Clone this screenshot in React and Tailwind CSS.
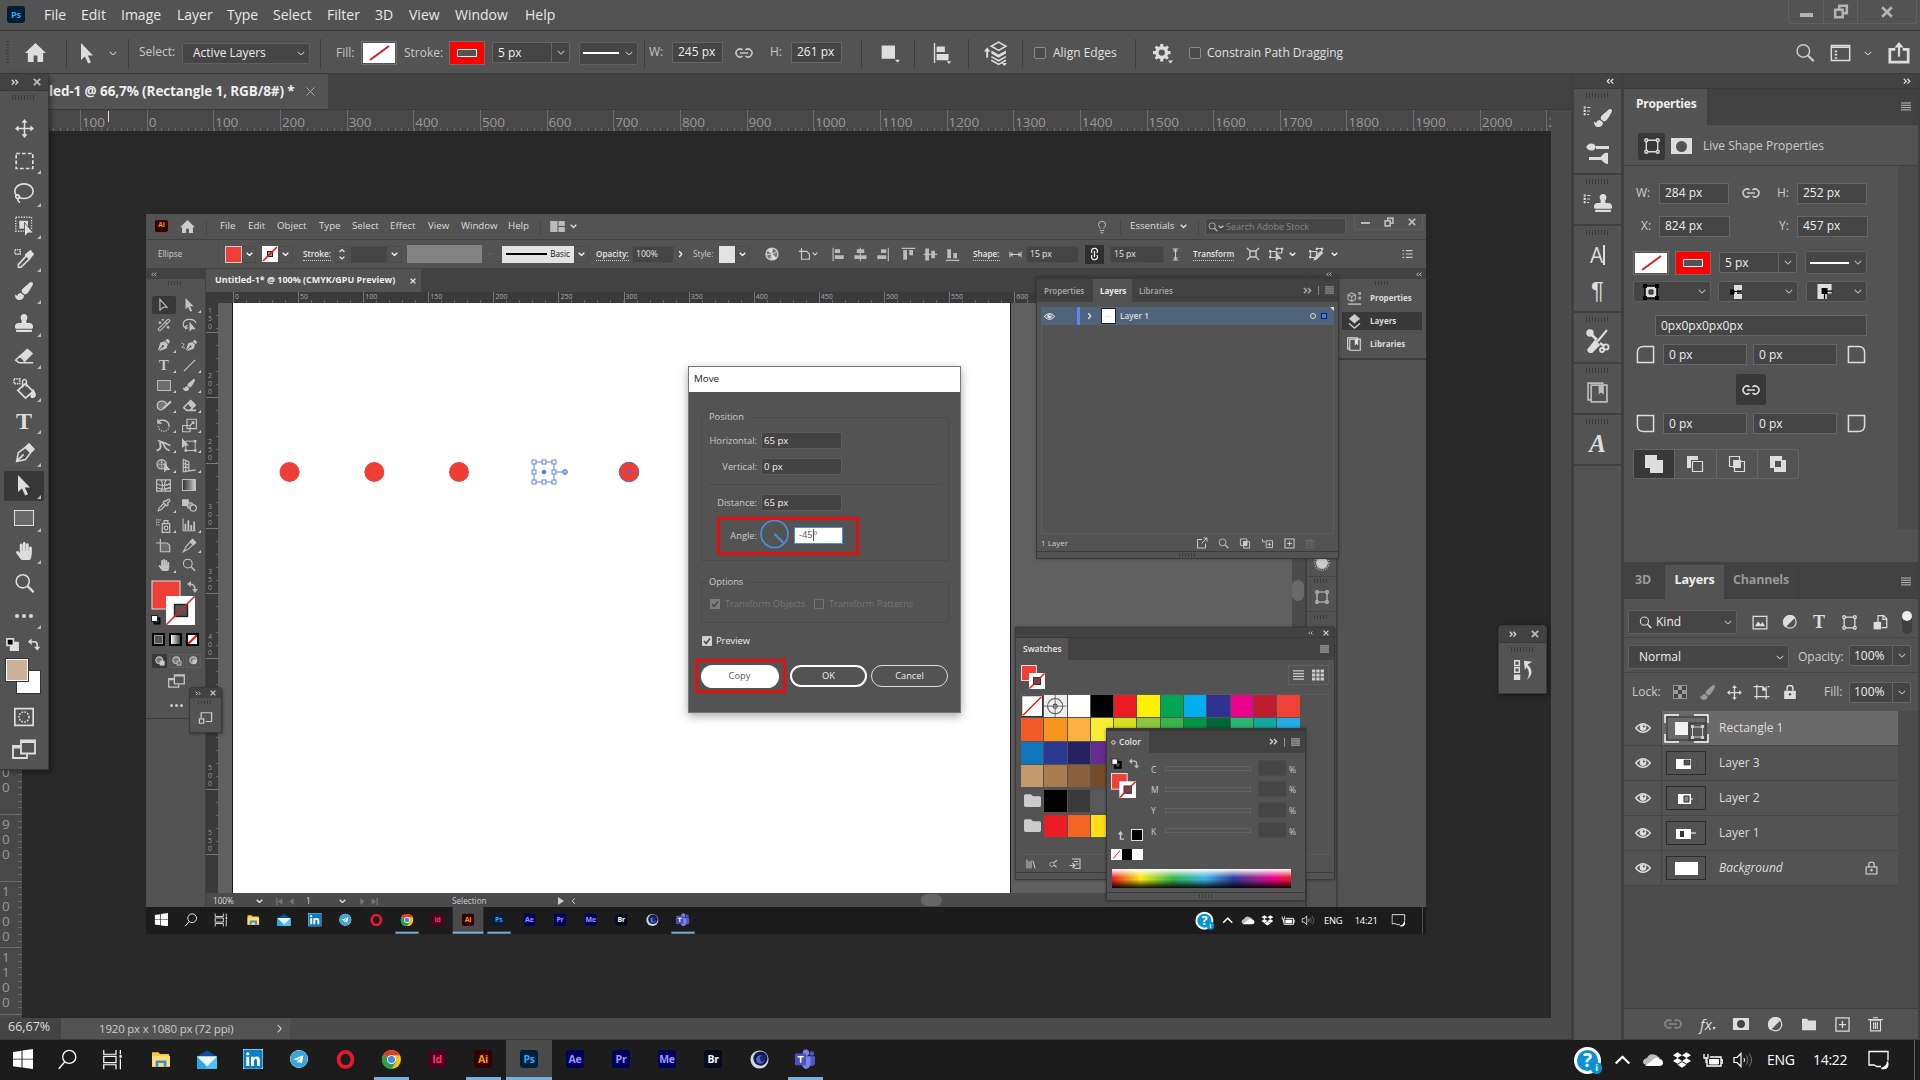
import { FaDropbox, FaEraser, FaFolder, FaHandPaper, FaPaintBrush, FaPenNib, FaStamp, FaTelegram, FaLinkedin } from 'react-icons/fa'
import { Lasso, Pipette, Wand2, Lightbulb, Library } from 'lucide-react'

/* ---------- small shared pieces ---------- */

function Ico({ vb = 24, className = 'w-5 h-5', children }) {
  return (
    <svg viewBox={`0 0 ${vb} ${vb}`} className={`shrink-0 ${className}`} fill="none" stroke="currentColor" strokeWidth="1.8">
      {children}
    </svg>
  )
}

function Chev({ className = 'w-[8px]' }) {
  return (
    <svg viewBox="0 0 10 6" className={`shrink-0 ${className}`} fill="none" stroke="currentColor" strokeWidth="1.3"><path d="M1 1l4 4 4-4" /></svg>
  )
}

function Dbl({ left, className = 'w-[8px]' }) {
  return (
    <svg viewBox="0 0 10 8" className={`shrink-0 ${className} ${left ? 'rotate-180' : ''}`} fill="none" stroke="currentColor" strokeWidth="1.6"><path d="M1 1l3 3-3 3M5.500 1l3 3-3 3" /></svg>
  )
}

function Cross({ className = 'w-[8px]' }) {
  return (
    <svg viewBox="0 0 10 10" className={`shrink-0 ${className}`} fill="none" stroke="currentColor" strokeWidth="2.2"><path d="M1 1l8 8M9 1l-8 8" /></svg>
  )
}

function Burger({ className = 'w-[10px]' }) {
  return (
    <svg viewBox="0 0 10 9" className={`shrink-0 ${className}`} stroke="currentColor" strokeWidth="1"><path d="M0 1h10M0 3.300h10M0 5.600h10M0 7.900h10" /></svg>
  )
}

const Grip = ({ className = 'w-[24px] h-[5px]' }) => (
  <div className={`shrink-0 bg-[repeating-linear-gradient(90deg,#3a3a3a_0_1px,transparent_1px_3px)] ${className}`} />
)

const Div = ({ className = '' }) => <div className={`w-px h-[29px] bg-[#3e3e3e] shrink-0 ${className}`} />

function NoneBox({ className }) {
  return (
    <svg viewBox="0 0 32 20" preserveAspectRatio="none" className={`shrink-0 ${className}`}><rect width="32" height="20" fill="#fff" /><path d="M7 17L26 3" stroke="#d0202a" strokeWidth="2" /></svg>
  )
}

function StrokeRed({ className }) {
  return (
    <svg viewBox="0 0 32 20" className={className}><rect width="32" height="20" fill="#f00" /><rect x="6.500" y="6.500" width="19" height="7" fill="#535353" stroke="#fff" /></svg>
  )
}

const Home = ({ className }) => (
  <svg viewBox="0 0 22 20" className={`shrink-0 ${className}`} fill="currentColor"><path d="M11 0L0 10.500h3V20h6v-7h4v7h6v-9.500h3z" /></svg>
)

const ArrowIcon = ({ className, hollow }) => (
  <svg viewBox="0 0 14 21" className={`shrink-0 ${className}`} fill={hollow ? 'none' : 'currentColor'} stroke={hollow ? 'currentColor' : 'none'} strokeWidth="1.500"><path d={hollow ? 'M2 2v15l4.500-4H12z' : 'M1 0v17l4-3.500 3.200 7 2.800-1.300-3.200-6.700H13z'} /></svg>
)

const LinkIcon = ({ className = '', size = 'w-[18px] h-[10px]' }) => (
  <svg viewBox="0 0 18 10" className={`shrink-0 ${size} ${className}`} fill="none" stroke="currentColor" strokeWidth="1.600"><path d="M7.500 1.800A4 4 0 1 0 7.500 8.200M10.500 1.800A4 4 0 1 1 10.500 8.200M5 5h8" /></svg>
)

const Nodes = ({ className }) => (
  <Ico vb={14} className={className}><g strokeWidth="1.200"><path d="M2 2h10v10H2z" /><g fill="#535353"><circle cx="2" cy="2" r="1.300" /><circle cx="12" cy="2" r="1.300" /><circle cx="2" cy="12" r="1.300" /><circle cx="12" cy="12" r="1.300" /></g></g></Ico>
)

const Magnifier = ({ className = 'w-5 h-5' }) => (
  <Ico className={className}><circle cx="10" cy="9.500" r="7.500" /><path d="M15.500 15l7 7" strokeWidth="2.600" /></Ico>
)

const MoveIcon = ({ className = 'w-[19px] h-[19px]' }) => (
  <Ico className={className}><path d="M12 3v18M3 12h18" strokeWidth="2" /><path d="M12 0l3.800 4.600H8.200zM12 24l3.800-4.600H8.200zM0 12l4.600-3.800v7.600zM24 12l-4.600-3.800v7.600z" fill="currentColor" stroke="none" /></Ico>
)

const TypeT = ({ className }) => <span className={`font-['Liberation_Serif'] font-bold leading-none ${className}`}>T</span>

const ScreenMode = ({ className }) => (
  <Ico className={className}><path d="M9 8H1v12h14v-4M1 9.500h8" /><path d="M9 2.500h14v13H9zM9 4h14" /></Ico>
)

const SwapArrow = ({ className }) => (
  <Ico vb={14} className={className}><path d="M3 4h5q3 0 3 3v3" strokeWidth="1.700" /><path d="M5 .5L1 4l4 3.500zM7.500 9.500h7L11 13.500z" fill="currentColor" stroke="none" /></Ico>
)

const Eye = ({ className = 'w-[16px] h-[12px]' }) => (
  <svg viewBox="0 0 16 12" className={`shrink-0 ${className}`} fill="none"><path d="M.7 6Q8-2.500 15.300 6 8 14.500.7 6z" stroke="#ddd" strokeWidth="1.500" fill="none" /><circle cx="8" cy="5.600" r="3.300" fill="#ddd" /><circle cx="8.800" cy="4.600" r="1" fill="#444" /></svg>
)

function Field({ className, children }) {
  return <div className={`bg-[#454545] border border-[#666] flex items-center pl-[5px] text-[12px] text-[#eee] leading-none shrink-0 ${className}`}>{children}</div>
}

function Drop({ className, children }) {
  return (
    <div className={`bg-[#454545] border border-[#606060] rounded-[2px] flex items-center justify-between text-[12px] text-[#eee] leading-none shrink-0 pr-[4px] ${className}`}>
      {children}
      <Chev className="w-[8px] text-[#bbb]" />
    </div>
  )
}

function Split({ className, children, pl = 'pl-[5px]' }) {
  return (
    <div className={`bg-[#454545] border border-[#666] rounded-[2px] flex text-[12px] text-[#eee] leading-none shrink-0 ${className}`}>
      <div className={`flex-1 flex items-center ${pl}`}>{children}</div>
      <div className="w-[18px] border-l border-[#666] flex items-center justify-center"><Chev className="w-[8px] text-[#bbb]" /></div>
    </div>
  )
}

/* ---------- menu + options bar ---------- */

const MENU = [
  ['File', 'w-[37px]'], ['Edit', 'w-[40px]'], ['Image', 'w-[56px]'], ['Layer', 'w-[50px]'], ['Type', 'w-[46px]'], ['Select', 'w-[54px]'],
  ['Filter', 'w-[48px]'], ['3D', 'w-[34px]'], ['View', 'w-[46px]'], ['Window', 'w-[70px]'], ['Help', 'w-[40px]'],
]

function MenuBar() {
  return (
    <div className="h-[31px] shrink-0 flex border-b border-[#3b3b3b] bg-[#535353]">
      <div className="ml-[7px] mt-[6px] w-[18px] h-[17px] rounded-[3px] bg-[#001d34] text-[#31a8ff] text-[9px] font-bold flex items-center justify-center">Ps</div>
      <div className="ml-[19px] flex h-[29px] items-center text-[14px] leading-none text-[#e8e8e8]">
        {MENU.map(([t, w]) => <span key={t} className={w}>{t}</span>)}
      </div>
      <div className="ml-auto mr-[3px] flex h-[24px] border border-t-0 border-[#606060] rounded-b-[3px] text-[#b4b4b4]">
        <div className="w-[35px] border-r border-[#606060] flex justify-center"><div className="mt-[13px] w-[13px] h-[4px] bg-[#b4b4b4]" /></div>
        <div className="w-[34px] border-r border-[#606060] flex items-center justify-center">
          <Ico vb={18} className="w-[18px] h-[15px]"><path d="M7 6V2h9v9h-4M2 7h9v9H2z" strokeWidth="3" /></Ico>
        </div>
        <div className="w-[58px] flex items-center justify-center"><Cross className="w-[12px]" /></div>
      </div>
    </div>
  )
}

const Lbl = ({ className, children }) => <span className={`shrink-0 whitespace-nowrap ${className}`}>{children}</span>

function OptionsBar() {
  return (
    <div className="h-[43px] pt-[2px] shrink-0 flex items-center bg-[#535353] border-b border-[#3b3b3b] text-[12px] leading-none text-[#c8c8c8]">
      <div className="ml-[6px] w-[3px] h-[24px] shrink-0 bg-[repeating-linear-gradient(#3c3c3c_0_1px,transparent_1px_3px)]" />
      <Home className="ml-[16px] w-[21px] text-[#ddd]" />
      <Div className="ml-[20px]" />
      <ArrowIcon className="ml-[13px] w-[14px] h-[21px] text-[#ddd]" />
      <Chev className="ml-[15px] w-[8px]" />
      <Div className="ml-[11px]" />
      <Lbl className="ml-[10px] w-[43px] mt-[-3px]">Select:</Lbl>
      <Drop className="w-[128px] h-[21px] pl-[10px]">Active Layers</Drop>
      <Div className="ml-[10px]" />
      <Lbl className="ml-[15px] w-[25px]">Fill:</Lbl>
      <div className="w-[36px] h-[24px] border border-[#707070] p-px shrink-0"><NoneBox className="w-full h-full" /></div>
      <Lbl className="ml-[7px] w-[45px]">Stroke:</Lbl>
      <div className="w-[36px] h-[24px] border border-[#707070] p-px shrink-0 bg-[#f00]"><StrokeRed className="w-full h-full" /></div>
      <Split className="ml-[7px] w-[78px] h-[21px] mt-[-1px]">5 px</Split>
      <Drop className="ml-[9px] w-[59px] h-[23px] pl-[3px]"><div className="w-[36px] h-[2px] bg-white" /></Drop>
      <Div className="ml-[6px]" />
      <Lbl className="ml-[4px] w-[23px] mt-[-2px]">W:</Lbl>
      <Field className="w-[51px] h-[21px] mt-[-2px]">245 px</Field>
      <LinkIcon className="ml-[12px] mt-[-1px]" />
      <Lbl className="ml-[17px] w-[21px] mt-[-2px]">H:</Lbl>
      <Field className="w-[51px] h-[21px] mt-[-2px]">261 px</Field>
      <Div className="ml-[19px]" />
      <Ico className="ml-[18px] w-[20px] h-[20px] text-[#ddd]"><path d="M2 3h16v16H2zM18 20h6l-3 3.500z" fill="currentColor" stroke="none" /></Ico>
      <Div className="ml-[14px]" />
      <Ico className="ml-[17px] w-[22px] h-[22px] text-[#ddd]"><path d="M2 1h1.500v22H2zM5 5h9v6H5zM5 13h13v7H5zM16 21h5l-2.500 3z" fill="currentColor" stroke="none" /></Ico>
      <Div className="ml-[14px]" />
      <Ico className="ml-[14px] w-[25px] h-[25px] text-[#ddd]"><path d="M4 16V8" /><path d="M1 10l3-4 3 4z" fill="currentColor" stroke="none" /><path d="M8 5l7-4 7 4-7 4z" strokeWidth="1.500" /><path d="M8 9l7 4 7-4v3l-7 4-7-4z" fill="currentColor" stroke="none" /><path d="M8 15l7 4 7-4M8 18.500l7 4 7-4" strokeWidth="1.500" /><path d="M18 21h5l-2.500 3z" fill="currentColor" stroke="none" /></Ico>
      <Div className="ml-[14px]" />
      <div className="ml-[11px] w-[12px] h-[12px] rounded-[2px] border border-[#8a8a8a] bg-[#4a4a4a] shrink-0" />
      <Lbl className="ml-[7px] w-[82px] text-[#e0e0e0]">Align Edges</Lbl>
      <Div />
      <Ico className="ml-[17px] w-[21px] h-[21px] text-[#ddd]"><circle cx="10" cy="11" r="5.500" strokeWidth="4" /><path d="M10 1v4M10 17v4M0 11h4M16 11h4M3 4l3 3M14 15l3 3M17 4l-3 3M6 15l-3 3" strokeWidth="3.500" /><path d="M17 20h6l-3 3.500z" fill="currentColor" stroke="none" /></Ico>
      <div className="ml-[15px] w-[12px] h-[12px] rounded-[2px] border border-[#8a8a8a] bg-[#4a4a4a] shrink-0" />
      <Lbl className="ml-[6px] text-[#e0e0e0]">Constrain Path Dragging</Lbl>
      <Magnifier className="ml-auto w-[20px] h-[20px] text-[#ccc]" />
      <Ico className="ml-[14px] w-[23px] h-[20px] text-[#ddd]"><path d="M1 3h22v18H1zM1 5h22" /><path d="M5 9h3v2H5zM5 13h3v2H5zM5 17h3v2H5z" fill="currentColor" stroke="none" /></Ico>
      <Chev className="ml-[12px] w-[8px]" />
      <Ico className="ml-[16px] mr-[10px] w-[22px] h-[22px] text-[#ddd]"><path d="M8 8H2v14h20V8h-6" strokeWidth="3" /><path d="M12 16V4" strokeWidth="2.400" /><path d="M12 0l5 6H7z" fill="currentColor" stroke="none" /></Ico>
    </div>
  )
}

/* ---------- left tool palette ---------- */

const PS_TOOLS = [
  <MoveIcon />,
  <Ico className="w-[21px] h-[20px]"><path d="M2 3h20v18H2z" strokeDasharray="4.500 2.500" strokeWidth="2" /></Ico>,
  <Lasso size={22} strokeWidth={1.8} />,
  <Ico className="w-[21px] h-[22px]"><path d="M2 2h18v16H2z" strokeDasharray="1.500 1.500" strokeWidth="1.500" /><path d="M6 6h10v9H6z" fill="currentColor" stroke="none" /><path d="M12 8v16l4-4h6z" fill="currentColor" stroke="#535353" strokeWidth="1" /></Ico>,
  <Ico className="w-[23px] h-[21px]"><path d="M1 2h6v5H1z" strokeDasharray="1.500 1" /><path d="M14 9L5 19v3h3l9-9" /><path d="M12 8l6 6 1-2 4-5-4-5-5 4z" fill="currentColor" stroke="none" /></Ico>,
  <FaPaintBrush size={18} />,
  <FaStamp size={18} />,
  <Ico className="w-[20px] h-[20px]"><path d="M2 17l5-5 6 6-2 2H6zM11 20h12" /><path d="M7 11l9-8 7 6-9 9z" fill="currentColor" stroke="none" /></Ico>,
  <Ico className="w-[23px] h-[23px]"><path d="M1 2h6v5H1z" strokeDasharray="1.500 1" /><path d="M5 14l8-7 8 8-8 7z" /><path d="M10 11V4q2-3 4 0v6" strokeWidth="1.500" /><path d="M21 14q4 6 0 7t0-7z" fill="currentColor" /></Ico>,
  <TypeT className="text-[24px]" />,
  <Ico className="w-[21px] h-[21px]"><path d="M3 21l2-10 8-6 6 6-6 8zM3 21l8-8" /><path d="M14 4l3-3 6 6-3 3z" fill="currentColor" /></Ico>,
  <ArrowIcon className="w-[14px] h-[21px]" />,
  <div className="w-[20px] h-[16px] border border-[#ddd] bg-[#6a6a6a]" />,
  <FaHandPaper size={18} />,
  <Magnifier className="w-[21px] h-[21px]" />,
  <div className="flex gap-[3px]"><i className="w-1 h-1 rounded-full bg-[#ddd]" /><i className="w-1 h-1 rounded-full bg-[#ddd]" /><i className="w-1 h-1 rounded-full bg-[#ddd]" /></div>,
]

function ToolPalette() {
  return (
    <div className="absolute left-0 top-[73px] w-[49px] h-[697px] bg-[#535353] border border-l-0 border-[#383838] rounded-t-[4px] shadow-[2px_2px_5px_rgba(0,0,0,0.4)] flex flex-col text-[#ddd]">
      <div className="h-[17px] bg-[#424242] border-b border-[#383838] flex items-center shrink-0 rounded-t-[4px]">
        <Dbl className="ml-[11px] w-[8px]" /><Cross className="ml-[14px] w-[8px] text-[#bbb]" />
      </div>
      <div className="h-[21px] flex justify-center pt-[4px] shrink-0"><Grip /></div>
      {PS_TOOLS.map((icon, i) => (
        <div key={i} className="h-[32.5px] shrink-0 px-[4px] py-[1px] flex">
          <div className={`relative flex-1 flex items-center justify-center ${i === 11 ? 'bg-[#383838] rounded-[2px]' : ''}`}>
            {icon}
            {i > 0 && i !== 14 && <div className="absolute right-[3px] bottom-[2px] border-l-[4px] border-b-[4px] border-l-transparent border-b-[#bbb]" />}
          </div>
        </div>
      ))}
      <div className="h-[25px] flex items-center justify-between pl-[6px] pr-[8px] shrink-0">
        <Ico vb={14} className="w-[13px] h-[13px]"><path d="M5 5h8v8H5z" fill="#ddd" /><path d="M1 1h7v7H1z" fill="#000" /></Ico>
        <SwapArrow className="w-[13px] h-[13px]" />
      </div>
      <svg viewBox="0 0 37 37" className="ml-[5px] mt-[1px] w-[37px] h-[37px] shrink-0">
        <rect x="11.500" y="12.500" width="24" height="23" fill="#fff" stroke="#333" />
        <rect x=".5" y=".5" width="23" height="23" fill="#fff" stroke="#333" /><rect x="2" y="2" width="20" height="20" fill="#cbb199" />
      </svg>
      <div className="h-[43px] flex items-center justify-center shrink-0">
        <Ico className="w-[24px] h-[20px]"><path d="M1 2h22v20H1z" strokeWidth="2" /><circle cx="12" cy="12" r="6" strokeDasharray="2 1.500" /></Ico>
      </div>
      <div className="flex justify-center"><ScreenMode className="w-[24px] h-[24px]" /></div>
    </div>
  )
}

/* ---------- Illustrator window placed on the canvas ---------- */

const AI_MENU = [
  ['File', 'w-[28px]'], ['Edit', 'w-[29px]'], ['Object', 'w-[42px]'], ['Type', 'w-[33px]'], ['Select', 'w-[38px]'], ['Effect', 'w-[38px]'],
  ['View', 'w-[33px]'], ['Window', 'w-[47px]'], ['Help', 'w-[32px]'],
]

const AiInput = ({ className, children }) => (
  <div className={`h-[17px] bg-[#454545] border border-[#4d4d4d] shrink-0 flex items-center pl-[3px] text-[8.600px] text-[#e6e6e6] ${className}`}>{children}</div>
)

const AiChev = ({ className }) => <div className={`h-[17px] shrink-0 border border-[#4b4b4b] flex items-center justify-center text-[#eee] ${className}`}><Chev className="w-[7px] stroke-2" /></div>

const Under = ({ className, children }) => <div className={`shrink-0 ${className}`}><span className="border-b border-dotted border-[#ccc] pb-px text-[#e6e6e6] font-semibold">{children}</span></div>

const ALIGN = [
  'M2 1h1.500v18H2zM5 3h7v5H5zM5 11h12v5H5z',
  'M9 1h1.500v18H9zM5 3h10v5H5zM2 11h16v5H2z',
  'M17 1h1.500v18H17zM8 3h7v5H8zM3 11h12v5H3z',
  'M1 1h18v1.500H1zM3 4h5v13H3zM11 4h5v7h-5z',
  'M1 9h18v1.500H1zM3 2h5v16H3zM11 5h5v10h-5z',
  'M1 17h18v1.500H1zM3 3h5v12H3zM11 8h5v7h-5z',
]

const NodeGlyph = ({ pen }) => (
  <Ico vb={20} className="w-[15px] h-[15px]"><path d="M2 6h8v8H2zM10 2h7v6h-7" strokeWidth="1.600" /><path d="M0 4h3v3H0zM0 12h3v3H0zM9 1h3v3H9zM16 1h3v3h-3z" fill="currentColor" stroke="none" /><path d={pen ? 'M6 18l1-4 9-9 3 3-9 9z' : 'M9 6v13l3-3h5z'} fill="currentColor" stroke="none" /></Ico>
)

function AiTopBars() {
  return (
    <>
      <div className="h-[26px] shrink-0 flex items-center border-b border-[#414141] text-[9.700px] leading-none text-[#ddd]">
        <div className="ml-[9px] mt-[-2px] w-[13px] h-[12px] rounded-[2px] bg-[#330000] text-[#ff9a00] text-[6.500px] font-bold flex items-center justify-center">Ai</div>
        <Home className="ml-[12px] w-[15px] text-[#ccc]" />
        <div className="ml-[11px] w-px h-[16px] bg-[#484848]" />
        <div className="ml-[13px] flex mt-[-2px]">{AI_MENU.map(([t, w]) => <span key={t} className={w}>{t}</span>)}</div>
        <div className="w-px h-[16px] bg-[#484848]" />
        <svg viewBox="0 0 16 12" className="ml-[9px] w-[15px] h-[11px] shrink-0" fill="#bbb"><path d="M0 0h8v12H0zM9 0h7v5.500H9zM9 6.500h7V12H9z" /></svg>
        <Chev className="ml-[5px] w-[7px] stroke-2" />
        <Lightbulb className="ml-auto text-[#ccc]" size={14} strokeWidth={1.5} />
        <div className="ml-[11px] w-px h-[16px] bg-[#484848]" />
        <span className="ml-[9px] w-[50px] mt-[-2px]">Essentials</span>
        <Chev className="w-[7px] stroke-2" />
        <div className="ml-[11px] w-px h-[16px] bg-[#484848]" />
        <div className="ml-[6px] w-[141px] h-[17px] bg-[#454545] border border-[#5c5c5c] flex items-center text-[9px] text-[#858585]">
          <Magnifier className="ml-[2px] w-[10px] h-[10px] text-[#ccc]" /><Chev className="w-[6px] text-[#ccc] stroke-2" /><span className="ml-[2px]">Search Adobe Stock</span>
        </div>
        <div className="ml-[8px] mr-[3px] self-start w-[69px] h-[16px] border border-t-0 border-[#5f5f5f] rounded-b-[2px] flex items-center justify-between px-[6px] text-[#bbb]">
          <div className="w-[9px] h-[2.500px] bg-[#bbb] mt-[3px]" />
          <Ico vb={18} className="w-[12px] h-[10px]"><path d="M7 6V2h9v9h-4M2 7h9v9H2z" strokeWidth="3" /></Ico>
          <Cross className="w-[8px]" />
        </div>
      </div>
      <div className="h-[29px] shrink-0 flex items-center border-b border-[#414141] text-[8.200px] leading-none text-[#ccc]">
        <span className="ml-[12px] w-[60px] shrink-0">Ellipse</span>
        <div className="w-px h-[22px] bg-[#4b4b4b] mr-[6px]" />
        <div className="w-[17px] h-[17px] bg-[#ef4037] border border-[#ccc] shrink-0" /><AiChev className="w-[14px]" />
        <svg viewBox="0 0 16 16" className="ml-[6px] w-[16px] h-[16px] shrink-0"><rect width="16" height="16" fill="#fff" /><rect x="5.500" y="5.500" width="5" height="5" fill="#999" stroke="#222" /><path d="M1 15L15 1" stroke="#e11" strokeWidth="1.600" /></svg>
        <AiChev className="w-[15px]" />
        <Under className="ml-[10px] w-[32px]">Stroke:</Under>
        <div className="w-[14px] h-[17px] border border-[#4b4b4b] flex flex-col items-center justify-between py-[2px] text-[#eee] shrink-0"><Chev className="w-[6px] rotate-180 stroke-2" /><Chev className="w-[6px] stroke-2" /></div>
        <AiInput className="ml-px w-[37px]" /><AiChev className="w-[15px]" />
        <div className="ml-[5px] w-[75px] h-[18px] bg-[#838383] shrink-0" />
        <div className="w-[16px] flex justify-center text-[#6a6a6a] shrink-0"><Chev className="w-[6px]" /></div>
        <div className="ml-[4px] w-[72px] h-[17px] bg-[#e3e3e3] shrink-0 flex items-center justify-between px-[4px] text-[#111]"><div className="w-[41px] h-[2px] bg-black" />Basic</div>
        <AiChev className="w-[15px]" />
        <Under className="ml-[7px] w-[36px]">Opacity:</Under>
        <AiInput className="w-[42px]">100%</AiInput>
        <div className="w-[13px] flex justify-center text-[#eee] shrink-0"><Chev className="w-[7px] -rotate-90 stroke-2" /></div>
        <span className="ml-[6px] w-[26px] shrink-0">Style:</span>
        <div className="w-[16px] h-[17px] bg-[#e3e3e3] shrink-0" /><AiChev className="w-[14px]" />
        <div className="w-[46px] flex justify-center shrink-0">
          <Ico vb={16} className="w-[14px] h-[14px]"><circle cx="8" cy="8" r="6.800" strokeWidth="1.500" fill="#777" /><path d="M8 8L4 2M8 8L1 9M8 8l7-3M8 8l5 5M8 8l-2 6" strokeWidth="1.200" /><path d="M8 8L9 1.500A7 7 0 0 0 3 4zM8 8l5 5a7 7 0 0 1-6 1.500z" fill="#ddd" stroke="none" /></Ico>
        </div>
        <div className="ml-[3px] w-[22px] flex items-center shrink-0"><Ico vb={16} className="w-[14px] h-[14px]"><path d="M4 5h6l3 3v6H4zM1 5h3M4 1v4" strokeWidth="1.300" /></Ico><Chev className="w-[6px] stroke-2" /></div>
        <div className="ml-[7px] flex shrink-0">
          {ALIGN.map((d, i) => <div key={i} className={`w-[22px] flex justify-center ${i === 3 ? 'ml-[4px]' : ''}`}><Ico vb={20} className="w-[15px] h-[15px]"><path d={d} fill="#bbb" stroke="none" /></Ico></div>)}
        </div>
        <Under className="ml-[10px] w-[36px]">Shape:</Under>
        <Ico vb={14} className="w-[13px] h-[13px]"><path d="M1 4v6M13 4v6M1 7h12M4 5L2 7l2 2M10 5l2 2-2 2" strokeWidth="1.100" /></Ico>
        <AiInput className="ml-[4px] w-[53px]">15 px</AiInput>
        <div className="ml-[6px] w-[19px] h-[19px] bg-[#2f2f2f] flex items-center justify-center text-white shrink-0"><LinkIcon size="w-[13px] h-[8px]" className="rotate-90" /></div>
        <AiInput className="ml-[6px] w-[54px]">15 px</AiInput>
        <div className="w-[22px] flex justify-center shrink-0"><Ico vb={14} className="w-[13px] h-[13px]"><path d="M4 1h6M4 13h6M7 1v12M5 4l2-2 2 2M5 10l2 2 2-2" strokeWidth="1.100" /></Ico></div>
        <Under className="ml-[7px] w-[48px]">Transform</Under>
        <div className="w-[24px] flex justify-center shrink-0"><Ico vb={16} className="w-[14px] h-[14px]"><path d="M4.500 4.500h7v7h-7zM1 1l3 3M15 1l-3 3M1 15l3-3M15 15l-3-3" strokeWidth="1.600" /></Ico></div>
        <div className="ml-[4px] w-[20px] shrink-0"><NodeGlyph /></div><Chev className="w-[7px] text-[#eee] stroke-2" />
        <div className="ml-[13px] w-[22px] shrink-0"><NodeGlyph pen /></div><Chev className="w-[7px] text-[#eee] stroke-2" />
        <Ico vb={12} className="ml-auto mr-[13px] w-[11px] h-[10px]"><path d="M0 2h2M4 2h8M0 6h2M4 6h8M0 10h2M4 10h8" strokeWidth="1.400" /></Ico>
      </div>
    </>
  )
}

const T = 'w-[15px] h-[15px]'
const AI_TOOLS = [
  <ArrowIcon hollow className="w-[11px] h-[15px]" />,
  <ArrowIcon className="w-[11px] h-[14px]" />,
  <Wand2 size={14} strokeWidth={1.8} />,
  <Ico className={T}><path d="M10 16q-9 0-8-7t10-7 10 6" strokeWidth="2" /><path d="M6 18q-2-6 3-6" strokeWidth="2" /><path d="M12 6v16l4-4h6z" fill="currentColor" stroke="none" /></Ico>,
  <FaPenNib size={12} />,
  <div className="flex items-center"><Ico vb={10} className="w-[5px] h-[13px]"><path d="M1 0q8 3 3 6t4 4" strokeWidth="2" /></Ico><FaPenNib size={11} /></div>,
  <TypeT className="text-[15px]" />,
  <Ico className={T}><path d="M3 21L21 3" strokeWidth="2" /></Ico>,
  <div className="w-[14px] h-[11px] border border-[#bbb] bg-[#6e6e6e]" />,
  <FaPaintBrush size={12} />,
  <Ico className="w-[18px] h-[15px]"><path d="M9 19q-8 0-8-7t8-7q6 0 7 5" fill="#777" /><path d="M8 19l2-4L22 4l2 3-12 11z" fill="currentColor" stroke="none" /></Ico>,
  <FaEraser size={13} />,
  <Ico className={T}><path d="M5 4q16-2 16 9" strokeWidth="2.200" /><path d="M2 1v8h8z" fill="currentColor" stroke="none" /><path d="M21 13a8 8 0 0 1-17 0" strokeDasharray="2 2" strokeWidth="2" /></Ico>,
  <Ico className={T}><path d="M8 2h15v15H8zM1 12h12v10H1zM13 12l6-6M15 6h4v4" /></Ico>,
  <Ico className={T}><path d="M1 20q8-2 6-9T14 8t9 4" strokeWidth="3" /><path d="M3 4q8 2 10 8t9 8" strokeWidth="2.500" /></Ico>,
  <Ico className={T}><path d="M6 5h15v15H6z" strokeWidth="1.600" /><path d="M0 0v16l5-4h6zM19 3h4v4h-4zM19 18h4v4h-4zM4 18h4v4H4z" fill="currentColor" stroke="none" /></Ico>,
  <Ico className={T}><circle cx="9" cy="10" r="7.500" fill="#6e6e6e" /><path d="M2 10h14M9 3v14" strokeDasharray="2 1" /><path d="M13 7v16l4-4h6z" fill="currentColor" stroke="none" /></Ico>,
  <Ico className={T}><path d="M2 2v20l20-3M2 2l9 4v14M2 9l9 2M2 15h9M6 4v17" /></Ico>,
  <Ico className={T}><path d="M1 3h22v18H1zM1 9q10 6 22 0M1 15q10 6 22 0M8 3q5 9 0 18M16 3q-5 9 0 18" /></Ico>,
  <div className="w-[14px] h-[12px] border border-[#bbb] bg-gradient-to-r from-[#333] to-[#ccc]" />,
  <Pipette size={14} strokeWidth={2} />,
  <Ico className={T}><path d="M1 3h9v9H1z" fill="currentColor" /><circle cx="13" cy="12" r="4.500" fill="#888" /><circle cx="18" cy="16" r="5" fill="#535353" /></Ico>,
  <Ico className="w-[17px] h-[15px]"><path d="M10 9h12v14H10zM13 9V4h6v5" strokeWidth="2" /><circle cx="16" cy="16" r="3" /><path d="M0 3h8M0 7h6M0 11h6" strokeDasharray="2 1.500" /></Ico>,
  <Ico className="w-[17px] h-[14px]"><path d="M1 1v21h22" /><path d="M5 21V10M10 21V4M15 21v-9M20 21V6" strokeWidth="3" /></Ico>,
  <Ico className={T}><path d="M7 8h11l4 4v10H7zM0 8h7M7 1v7" fill="#6e6e6e" /></Ico>,
  <Ico className={T}><path d="M2 22l5-9L17 3l4 4L11 17z" /><path d="M13 6l4-4 5 5-4 4z" fill="currentColor" /></Ico>,
  <FaHandPaper size={12} />,
  <Magnifier className="w-[14px] h-[14px]" />,
]
const NO_CORNER = [0, 2, 3, 5, 18, 19, 21, 24, 27]

function FillStroke({ className }) {
  return (
    <svg viewBox="0 0 24 24" className={`shrink-0 ${className}`}>
      <rect x=".5" y=".5" width="15" height="15" fill="#ef4037" stroke="#ddd" />
      <rect x="8" y="8" width="16" height="16" fill="#fff" /><rect x="12.500" y="12.500" width="7" height="7" fill="#535353" stroke="#333" />
      <path d="M8.500 23.500L23.500 8.500" stroke="#e11" strokeWidth="1.400" />
    </svg>
  )
}

const DefaultIcon = ({ className }) => (
  <Ico vb={12} className={className}><path d="M4.500 4.500h6v6h-6z" fill="#535353" stroke="#000" strokeWidth="2.400" /><path d="M1 1h6v6H1z" fill="#fff" stroke="#222" strokeWidth="1" /></Ico>
)

function AiTools() {
  return (
    <div className="w-[60px] shrink-0 border-r border-[#414141] flex flex-col text-[#c4c4c4]">
      <div className="h-[10px] bg-[#424242] pl-[5px] flex items-center shrink-0"><Dbl left className="w-[6px]" /></div>
      <div className="h-[16px] pt-[2px] pl-[22px] shrink-0"><Grip className="w-[15px] h-[4px]" /></div>
      <div className="pl-[5px] grid grid-cols-[25.5px_25.5px] auto-rows-[20px] shrink-0">
        {AI_TOOLS.map((icon, i) => (
          <div key={i} className={`relative flex items-center justify-center ${i === 0 ? 'bg-[#383838] rounded-[2px] my-px mx-px' : ''}`}>
            {icon}
            {!NO_CORNER.includes(i) && <div className="absolute right-[1px] bottom-[2px] border-l-[3px] border-b-[3px] border-l-transparent border-b-[#ccc]" />}
          </div>
        ))}
      </div>
      <div className="h-[50px] mt-[5px] pl-[5px] shrink-0">
        <svg viewBox="0 0 47 46" className="w-[47px] h-[46px]">
          <rect x="1" y="1" width="28" height="28" fill="#ef4037" stroke="#ddd" />
          <rect x="15" y="16" width="29" height="29" fill="#fff" /><rect x="23.500" y="24.500" width="13" height="12" fill="#535353" stroke="#222" strokeWidth="1.400" />
          <path d="M15 45L44 16" stroke="#d8232a" strokeWidth="1.600" />
          <path d="M39 4q5 0 5 6" fill="none" stroke="#bbb" strokeWidth="1.600" /><path d="M40 1v6l-4-3zM41 9h6l-3 4z" fill="#bbb" />
          <rect x="3.500" y="38.500" width="5" height="5" fill="none" stroke="#000" strokeWidth="2" /><rect x=".5" y="35.500" width="6" height="6" fill="#fff" stroke="#222" />
        </svg>
      </div>
      <div className="flex gap-[4px] pl-[6px] mt-[3px] h-[20px] shrink-0">
        <div className="w-[13px] h-[13px] border-2 border-black bg-[#535353] outline-1 outline-[#999] -outline-offset-3" />
        <div className="w-[13px] h-[13px] border-2 border-black bg-gradient-to-r from-white to-[#444]" />
        <div className="w-[13px] h-[13px] border-2 border-black bg-white overflow-hidden"><svg viewBox="0 0 10 10" className="w-full h-full"><path d="M0 10L10 0" stroke="#e11" strokeWidth="2.400" /></svg></div>
      </div>
      <div className="flex gap-[2px] pl-[6px] mt-[1px] shrink-0">
        {[0, 1, 2].map((i) => (
          <div key={i} className={`w-[15px] h-[14px] flex items-center justify-center ${i === 0 ? 'bg-[#383838]' : 'border border-[#5e5e5e]'}`}>
            <Ico vb={12} className="w-[10px] h-[10px]"><circle cx="5" cy="5" r="4" fill="#777" strokeWidth="1.300" />{i < 2 ? <path d="M6 6h5v5H6z" fill={i ? '#777' : '#ccc'} strokeWidth="1" /> : <path d="M5 5h4A4 4 0 0 1 5 9z" fill="#ccc" />}</Ico>
          </div>
        ))}
      </div>
      <div className="mt-[5px] pl-[21px] shrink-0"><ScreenMode className="w-[19px] h-[17px]" /></div>
      <div className="mt-[14px] pl-[24px] flex gap-[2px] shrink-0">
        <i className="w-[3px] h-[3px] rounded-full bg-[#ccc]" /><i className="w-[3px] h-[3px] rounded-full bg-[#ccc]" /><i className="w-[3px] h-[3px] rounded-full bg-[#ccc]" />
      </div>
      <div className="mt-[11px] h-px bg-[#3c3c3c] shrink-0" />
    </div>
  )
}

const AI_H = [0, 50, 100, 150, 200, 250, 300, 350, 400, 450, 500, 550, 600]
const AI_V = [150, 200, 250, 300, 350, 400, 450, 500, 550]
const DOTS = [56.5, 141.3, 226, 396]

function AiDocument() {
  const handles = [[301, 159], [311, 159], [321, 159], [301, 169], [321, 169], [301, 179], [311, 179], [321, 179]]
  return (
    <div className="w-[1099px] shrink-0 flex flex-col">
      <div className="h-[23px] bg-[#424242] flex shrink-0">
        <div className="w-[215px] bg-[#535353] flex items-center pl-[9px] text-[8.950px] font-bold text-[#eee] leading-none whitespace-nowrap">
          <span className="w-[195px]">Untitled-1* @ 100% (CMYK/GPU Preview)</span><Cross className="w-[6px]" />
        </div>
      </div>
      <div className="h-[11px] bg-[#3a3a3a] flex shrink-0 overflow-hidden text-[7px] leading-none text-[#aaa]">
        <div className="w-[27px] shrink-0" />
        {AI_H.map((n) => (
          <div key={n} className="w-[65.1px] shrink-0 border-l border-[#777] pl-[1px] pt-[1px] bg-[repeating-linear-gradient(90deg,transparent_0_12px,#666_12px_13px)] bg-[length:100%_3px] bg-no-repeat bg-bottom">{n}</div>
        ))}
      </div>
      <div className="h-[590px] flex shrink-0">
        <div className="w-[12px] bg-[#3a3a3a] shrink-0 flex flex-col overflow-hidden text-[7px] leading-none text-[#999]">
          {AI_V.map((n, i) => (
            <div key={n} className={`shrink-0 border-b border-[#777] flex flex-col justify-end pb-[1px] pl-[2px] bg-[repeating-linear-gradient(transparent_0_12px,#666_12px_13px)] bg-[length:2px_100%] bg-no-repeat bg-right ${i ? 'h-[65.3px]' : 'h-[30px]'}`}>
              {String(n).split('').map((c, j) => <span key={j} className="h-[8px]">{c}</span>)}
            </div>
          ))}
        </div>
        <div className="flex-1 bg-[#606060] flex pl-[14px]">
          <div className="w-[779px] bg-white border-x border-[#1a1a1a]">
            <svg viewBox="0 0 777 590" className="w-[777px] h-[590px]">
              {DOTS.map((x) => <circle key={x} cx={x} cy="169" r="10" fill="#ef3e36" />)}
              <circle cx="396" cy="169" r="9.800" fill="none" stroke="#5a6fc0" /><circle cx="396" cy="169" r="2" fill="#4b74e0" />
              <g stroke="#5b82e6" fill="#fff"><path d="M301 159h20v20h-20zM321 169h11" />{handles.map(([x, y]) => <rect key={x + '-' + y} x={x - 2} y={y - 2} width="4" height="4" />)}</g>
              <circle cx="311" cy="169" r="2.200" fill="#4b78ea" /><circle cx="332" cy="169" r="2.400" fill="#9db6f2" stroke="#5b82e6" />
            </svg>
          </div>
        </div>
        <div className="w-[13px] bg-[#4b4b4b] pt-[277px]"><div className="w-[12px] h-[21px] rounded-full bg-[#6a6a6a]" /></div>
      </div>
      <div className="h-[14px] pt-[2px] bg-[#4b4b4b] shrink-0 flex items-center text-[8.200px] leading-none text-[#ddd]">
        <Lbl className="w-[50px] pl-[7px]">100%</Lbl><Chev className="w-[7px] stroke-2" />
        <svg viewBox="0 0 20 8" className="ml-[12px] mr-[11px] w-[20px] h-[7px] shrink-0" fill="#757575"><path d="M0 0h1.500v8H0zM7 0v8L2 4zM20 0v8l-5-4z" /></svg>
        <Lbl className="w-[33px]">1</Lbl><Chev className="w-[7px] stroke-2" />
        <svg viewBox="0 0 20 8" className="ml-[13px] w-[20px] h-[7px] shrink-0" fill="#757575"><path d="M0 0v8l5-4zM13 0v8l5-4zM18.500 0H20v8h-1.500z" /></svg>
        <Lbl className="ml-[73px] w-[106px] text-[#ccc]">Selection</Lbl>
        <svg viewBox="0 0 6 8" className="w-[6px] h-[8px] shrink-0" fill="#ccc"><path d="M0 0v8l6-4z" /></svg>
        <Chev className="ml-[6px] w-[7px] rotate-90" />
        <div className="ml-[344px] mt-[-2px] w-[21px] h-[12px] rounded-full bg-[#666] shrink-0" />
      </div>
    </div>
  )
}

function AiRight() {
  return (
    <>
      <div className="w-[33px] shrink-0 border-x-2 border-[#404040] flex flex-col items-center text-[#c4c4c4]">
        <div className="h-[10px] w-full bg-[#424242] flex items-center justify-end pr-[4px]"><Dbl left className="w-[6px]" /></div>
        <Ico className="mt-[276px] w-[16px] h-[16px]"><circle cx="12" cy="12" r="8" fill="#ccc" /><circle cx="12" cy="12" r="10.800" strokeDasharray="1.500 2" /></Ico>
        <div className="mt-[5px] h-px w-full bg-[#464646]" />
        <Grip className="mt-[2px] w-[15px] h-[4px]" />
        <div className="mt-[7px]"><Nodes className="w-[14px] h-[14px]" /></div>
        <div className="mt-[7px] h-px w-full bg-[#464646]" />
        <Grip className="mt-[3px] w-[15px] h-[4px]" />
      </div>
      <div className="flex-1 flex flex-col">
        <div className="h-[10px] bg-[#424242] flex items-center justify-end pr-[4px] text-[#ccc]"><Dbl left className="w-[6px]" /></div>
        <div className="h-[81px] border-b-2 border-[#3c3c3c] text-[8px] font-bold leading-none text-[#ddd] flex flex-col">
          <div className="h-[7px] flex justify-center pt-[2px]"><Grip className="w-[15px] h-[4px]" /></div>
          <div className="h-[24px] flex items-center pl-[9px] pt-[1px]">
            <Ico vb={16} className="w-[15px] h-[15px] text-[#aaa]"><path d="M1 4l4-2 4 2v5l-4 2-4-2zM1 4l4 2 4-2M5 6v5" strokeWidth="1.300" /><path d="M12 1h3v3h-3zM12 6h3v3h-3zM1 13h14v2H1z" fill="currentColor" stroke="none" /></Ico><span className="ml-[8px]">Properties</span>
          </div>
          <div className="h-[19px] mx-[4px] mt-[2px] flex items-center pl-[5px] bg-[#383838]">
            <Ico vb={16} className="w-[15px] h-[15px]"><path d="M8 0l6 5-6 5-6-5z" fill="#ccc" stroke="none" /><path d="M2 9l6 5 6-5v2l-6 5-6-5z" fill="#ccc" stroke="none" /></Ico><span className="ml-[8px]">Layers</span>
          </div>
          <div className="h-[28px] flex items-center pl-[9px]"><BookIcon className="w-[14px] h-[14px]" /><span className="ml-[9px]">Libraries</span></div>
        </div>
      </div>
    </>
  )
}

const BookIcon = ({ className }) => (
  <Ico vb={20} className={className}><path d="M4 17H1V1h14v2" strokeWidth="1.600" /><path d="M4 3h15v16H4z" strokeWidth="1.600" /><path d="M11 3h5v9l-2.500-2L11 12z" fill="currentColor" stroke="none" /></Ico>
)

function AiLayersPanel() {
  return (
    <div className="absolute left-[890px] top-[63px] w-[303px] h-[282px] bg-[#535353] border border-[#3a3a3a] border-t-[2px] flex flex-col text-[8px] leading-none text-[#aaa] shadow-[0_0_3px_rgba(0,0,0,0.3)]">
      <div className="h-[23px] bg-[#424242] flex items-center shrink-0">
        <span className="w-[56px] pl-[7px] font-semibold">Properties</span>
        <div className="w-[39px] h-full bg-[#535353] flex items-center pl-[7px] font-bold text-[#eee]">Layers</div>
        <span className="pl-[7px] font-semibold">Libraries</span>
        <Dbl className="ml-auto w-[9px]" /><div className="ml-[6px] w-px h-[9px] bg-[#888]" /><Burger className="ml-[6px] mr-[4px] w-[9px]" />
      </div>
      <div className="mt-[5px] mx-[4px] h-[18px] bg-[#4f647c] flex items-center text-[#ddd] shrink-0">
        <Eye className="ml-[3px] w-[11px] h-[9px]" />
        <div className="ml-[22px] w-[3px] h-full bg-[#5b86ec]" />
        <Chev className="ml-[6px] w-[7px] -rotate-90 stroke-2" />
        <div className="ml-[8px] w-[15px] h-[16px] bg-white border border-[#222] flex items-center justify-center text-[#c66] text-[5px]">····</div>
        <span className="ml-[4px] text-[8.300px] font-semibold">Layer 1</span>
        <div className="ml-auto w-[6px] h-[6px] rounded-full border border-[#ddd]" />
        <div className="ml-[5px] w-[6px] h-[6px] border border-[#0a1c5c] bg-[#4a7cf0]" />
        <div className="ml-[3px] self-start border-t-[4px] border-l-[4px] border-t-[#ddd] border-l-transparent" />
      </div>
      <div className="mx-[4px] flex-1 border-b border-x border-[#5d5d5d]" />
      <div className="h-[17px] flex items-center pl-[4px] pt-[1px] shrink-0 text-[#ccc]">
        <span className="w-[155px]">1 Layer</span>
        <div className="flex items-center gap-[10px]">
          <Ico className="w-[12px] h-[12px]"><path d="M12 5H3v17h16v-9M11 13L21 3M15 2h7v7" strokeWidth="2" /></Ico>
          <Magnifier className="w-[11px] h-[11px]" />
          <Ico className="w-[12px] h-[11px]"><path d="M2 2h14v14H2zM9 8h13v14H9z" strokeWidth="2" /><path d="M9 8h7v8H9z" fill="currentColor" /></Ico>
          <Ico className="w-[13px] h-[11px]"><path d="M1 2v6h6M9 6h14v15H9zM16 10v8M12 14h8" strokeWidth="2" /></Ico>
          <Ico className="w-[11px] h-[11px]"><path d="M2 2h20v20H2zM12 7v10M7 12h10" strokeWidth="2.200" /></Ico>
          <Ico className="w-[10px] h-[11px] text-[#6b6b6b]"><path d="M4 6h16v17H4zM1 5h22M9 2h6M9 9v10M15 9v10" strokeWidth="2" /></Ico>
        </div>
      </div>
      <div className="h-[7px] border-t border-[#3c3c3c] flex justify-center shrink-0"><Grip className="w-[18px] h-[4px] mt-[1px]" /></div>
    </div>
  )
}

const SWATCH_ROWS = [
  ['bg-white', 'bg-[#eee]', 'bg-white', 'bg-black', 'bg-[#ed1c24]', 'bg-[#fff200]', 'bg-[#00a651]', 'bg-[#00aeef]', 'bg-[#2e3192]', 'bg-[#ec008c]', 'bg-[#be1e2d]', 'bg-[#ef4136]'],
  ['bg-[#f15a29]', 'bg-[#f7941d]', 'bg-[#fbb040]', 'bg-[#f9ed32]', 'bg-[#d7df23]', 'bg-[#8dc63f]', 'bg-[#39b54a]', 'bg-[#009444]', 'bg-[#006838]', 'bg-[#2bb673]', 'bg-[#13a89e]', 'bg-[#27aae1]'],
  ['bg-[#1075bc]', 'bg-[#2b3990]', 'bg-[#262262]', 'bg-[#662d91]'],
  ['bg-[#c49a6c]', 'bg-[#a97c50]', 'bg-[#8b5e3c]', 'bg-[#754c29]'],
]
const FOLDER_ROWS = [
  ['bg-black', 'bg-[#3a3a3a]', 'bg-[#58595b]'],
  ['bg-[#ed1c24]', 'bg-[#f26522]', 'bg-[#ffde17]'],
]

function SwatchesPanel() {
  return (
    <div className="absolute left-[869px] top-[413px] w-[320px] h-[253px] bg-[#535353] border border-[#3a3a3a] flex flex-col text-[8.500px] leading-none text-[#ccc] shadow-[0_0_3px_rgba(0,0,0,0.4)]">
      <div className="h-[10px] bg-[#424242] border-b border-[#383838] flex items-center justify-end pr-[5px] shrink-0"><Dbl left className="w-[5px] mr-[10px]" /><Cross className="w-[6px]" /></div>
      <div className="h-[22px] bg-[#424242] flex items-center shrink-0 justify-between">
        <div className="w-[52px] h-full bg-[#535353] flex items-center pl-[7px] font-semibold text-[#e6e6e6]">Swatches</div>
        <Burger className="w-[9px] mr-[5px]" />
      </div>
      <div className="h-[34px] flex items-center justify-between pl-[5px] pr-[5px] shrink-0">
        <FillStroke className="w-[24px] h-[24px]" />
        <div className="w-[41px] h-[20px] border border-[#5f5f5f] flex items-center justify-around mt-[-4px]">
          <Ico vb={12} className="w-[11px] h-[12px]"><path d="M0 1.500h12M0 4.500h12M0 7.500h12M0 10.500h12" strokeWidth="1.600" /></Ico>
          <Ico vb={12} className="w-[12px] h-[12px]"><path d="M0 2h12M0 6h12M0 10h12" strokeWidth="3" strokeDasharray="3.300 1" /></Ico>
        </div>
      </div>
      <div className="ml-[5px] mr-[5px] h-[161px] border border-[#5b5b5b] border-l-0 flex flex-col gap-[1px] shrink-0">
        {SWATCH_ROWS.map((row, r) => (
          <div key={r} className="flex gap-[1px] h-[22.300px]">
            {row.map((c, i) => (
              <div key={i} className={`w-[22.300px] h-[22.300px] ${c}`}>
                {r === 0 && i === 0 && <svg viewBox="0 0 22 22" className="w-full h-full"><rect x=".7" y=".7" width="20.600" height="20.600" fill="#fff" stroke="#222" /><path d="M2 20L20 2" stroke="#e11" strokeWidth="1.300" /></svg>}
                {r === 0 && i === 1 && <svg viewBox="0 0 22 22" className="w-full h-full" fill="none" stroke="#555"><circle cx="11" cy="11" r="7.500" /><circle cx="11" cy="11" r="2" /><path d="M0 11h22M11 0v22" strokeWidth=".8" /></svg>}
              </div>
            ))}
          </div>
        ))}
        {FOLDER_ROWS.map((row, r) => (
          <div key={r} className="flex gap-[1px] h-[22.400px] mt-[1.500px]">
            <div className="w-[22.300px] flex items-center justify-center"><FaFolder size={17} /></div>
            {row.map((c) => <div key={c} className={`w-[22.300px] h-[22.300px] ${c}`} />)}
          </div>
        ))}
      </div>
      <div className="flex-1 flex items-center pl-[9px] gap-[10px]">
        <Library size={12} strokeWidth={2} /><Ico className="ml-[2px] w-[9px] h-[10px]"><circle cx="8" cy="13" r="6" /><path d="M12 9l9-7M13 15l7 5" strokeWidth="3" /></Ico>
        <Ico className="ml-[1px] w-[12px] h-[12px]"><path d="M6 2h16v19H11M1 15h10M7 10l5 5-5 5M10 7h8M14 12h5" strokeWidth="2.200" /></Ico>
      </div>
      <div className="h-[7px] border-t border-[#3c3c3c] shrink-0" />
    </div>
  )
}

function ColorPanel() {
  return (
    <div className="absolute left-[960px] top-[514px] w-[200px] h-[173px] bg-[#535353] border border-[#383838] border-t-[3px] flex flex-col text-[8.500px] leading-none text-[#ccc] shadow-[0_0_3px_rgba(0,0,0,0.4)]">
      <div className="h-[22px] bg-[#424242] flex items-center shrink-0">
        <div className="w-[42px] h-full bg-[#535353] flex items-center pl-[4px] font-semibold text-[#e6e6e6]"><span className="w-[8px] text-[6px]">◇</span>Color</div>
        <Dbl className="ml-auto w-[9px]" /><div className="ml-[6px] w-px h-[9px] bg-[#999]" /><Burger className="ml-[6px] mr-[5px] w-[9px]" />
      </div>
      <div className="flex shrink-0 h-[96px]">
        <div className="w-[38px] pl-[4px]">
          <div className="flex gap-[6px] mt-[5px] text-[#bbb]"><DefaultIcon className="w-[11px] h-[11px]" /><SwapArrow className="w-[11px] h-[11px]" /></div>
          <FillStroke className="mt-[4px] w-[25px] h-[25px]" />
          <div className="mt-[31px] ml-[5px] flex items-center gap-[6px]"><Ico vb={10} className="w-[9px] h-[9px]"><path d="M5 2v7h4" strokeWidth="1.500" /><path d="M5 0l3 4H2z" fill="currentColor" stroke="none" /></Ico><div className="w-[12px] h-[12px] bg-black border border-[#ddd]" /></div>
        </div>
        <div className="pt-[6px]">
          {['C', 'M', 'Y', 'K'].map((c) => (
            <div key={c} className="h-[20.700px] flex items-center pl-[6px] pt-[1px]">
              <span className="w-[14px]">{c}</span>
              <div className="w-[86px] h-[5px] border border-[#626262] mt-[-2px]" />
              <div className="ml-[7px] w-[29px] h-[16px] bg-[#464646] border border-[#4c4c4c] mt-[-3px]" />
              <span className="ml-[2px]">%</span>
            </div>
          ))}
        </div>
      </div>
      <div className="flex ml-[4px] shrink-0"><NoneBox className="w-[11px] h-[11px]" /><div className="w-[10px] h-[11px] bg-black" /><div className="w-[11px] h-[11px] bg-white" /></div>
      <div className="mt-[9px] ml-[5px] w-[179px] h-[19px] shrink-0 bg-[linear-gradient(#fff,#fff0_45%,#0000_55%,#000e),linear-gradient(90deg,#ed1c24,#f7ec13_16%,#39b54a_34%,#39b5e8_52%,#2e3a9b_68%,#92278f_80%,#ec008c_90%,#ed1c24)]" />
      <div className="mt-[4px] h-[8px] border-t border-[#3a3a3a] flex justify-center"><Grip className="w-[15px] h-[4px] mt-px" /></div>
    </div>
  )
}

const MoveRow = ({ label, value, className }) => (
  <div className={`flex items-center ${className}`}>
    <span className="w-[55px] text-right">{label}</span>
    <div className="ml-[4px] w-[81px] h-[17px] bg-[#434343] border border-[#5c5c5c] flex items-center pl-[2px] text-[#eee] text-[9.600px]">{value}</div>
  </div>
)

const Tick = ({ on, className }) => (
  <div className={`w-[10px] h-[10px] rounded-[1px] shrink-0 ${className}`}>
    {on && <svg viewBox="0 0 10 10" className="w-full h-full"><path d="M2 5l2.200 2.500L8 2.500" fill="none" stroke="#444" strokeWidth="1.500" /></svg>}
  </div>
)

function MoveDialog() {
  return (
    <div className="absolute left-[542px] top-[152px] w-[273px] h-[347px] bg-[#535353] border border-[#777] shadow-[0_3px_9px_rgba(0,0,0,0.35)] text-[9.300px] leading-none text-[#ccc] flex flex-col">
      <div className="h-[25px] bg-white text-[#222] text-[9.800px] flex items-center pl-[5px] pb-[1px] shrink-0">Move</div>
      <div className="ml-[12px] mt-[25px] w-[248px] h-[144px] border border-[#4b4b4b] shrink-0 flex flex-col">
        <span className="w-[42px] pl-[2px] ml-[5px] mt-[-6px] h-[12px] bg-[#535353]">Position</span>
        <MoveRow label="Horizontal:" value="65 px" className="mt-[8px]" />
        <MoveRow label="Vertical:" value="0 px" className="mt-[9px]" />
        <div className="mt-[9px] mx-[6px] h-px bg-[#4b4b4b]" />
        <MoveRow label="Distance:" value="65 px" className="mt-[9px]" />
        <div className="ml-[15px] mt-[6px] w-[142px] h-[38px] border-[3px] border-[#e60f0f] flex items-center shrink-0">
          <span className="w-[37px] text-right">Angle:</span>
          <svg viewBox="0 0 29 32" className="ml-[3px] w-[29px] h-[32px]"><circle cx="14.500" cy="14" r="13.500" fill="none" stroke="#4a90d9" strokeWidth="1.700" /><path d="M14.500 14l9 9" stroke="#4a90d9" strokeWidth="2" /></svg>
          <div className="ml-[5px] mt-[-2px] w-[49px] h-[17px] bg-white border border-[#4a90d9] text-[#555] flex items-center pl-[4px]">-45<span className="w-px h-[12px] bg-[#555]" />º</div>
        </div>
      </div>
      <div className="ml-[12px] mt-[21px] w-[248px] h-[41px] border border-[#4b4b4b] shrink-0">
        <div className="w-[40px] pl-[2px] ml-[5px] mt-[-6px] h-[12px] bg-[#535353]">Options</div>
        <div className="flex items-center mt-[10px] ml-[8px] text-[#757575]">
          <Tick on className="bg-[#7d7d7d]" /><span className="ml-[5px] w-[89px]">Transform Objects</span>
          <Tick className="border border-[#757575]" /><span className="ml-[5px]">Transform Patterns</span>
        </div>
      </div>
      <div className="flex items-center ml-[13px] mt-[13px] text-[#eee]"><Tick on className="bg-[#d0d0d0]" /><span className="ml-[4px]">Preview</span></div>
      <div className="flex ml-[6px] mt-[13px] items-center text-[#eee]">
        <div className="w-[91px] h-[34px] border-[3px] border-[#e60f0f] flex items-center justify-center pr-[2px]"><div className="w-[78px] h-[23px] rounded-full bg-white text-[#555] flex items-center justify-center">Copy</div></div>
        <div className="ml-[4px] w-[77px] h-[22px] rounded-full border-2 border-white flex items-center justify-center">OK</div>
        <div className="ml-[4px] w-[77px] h-[22px] rounded-full border border-[#ddd] flex items-center justify-center">Cancel</div>
      </div>
    </div>
  )
}

function IllustratorWindow() {
  return (
    <div className="absolute left-[124px] top-[83px] w-[1280px] h-[720px] bg-[#535353] flex flex-col overflow-hidden">
      <AiTopBars />
      <div className="flex h-[638px] shrink-0"><AiTools /><AiDocument /><AiRight /></div>
      <div className="h-[27px] bg-[#1c1c1c] shrink-0"><div className="origin-top-left scale-[0.6667] w-[1920px] h-[40px]"><Taskbar active="Ai" time="14:21" /></div></div>
      <AiLayersPanel />
      <SwatchesPanel />
      <ColorPanel />
      <MoveDialog />
      <div className="absolute left-[43px] top-[473px] w-[33px] h-[46px] bg-[#535353] border border-[#3a3a3a] rounded-t-[3px] shadow-[1px_1px_3px_rgba(0,0,0,0.4)] flex flex-col items-center text-[#ccc]">
        <div className="h-[10px] w-full bg-[#424242] flex items-center justify-center gap-[9px]"><Dbl className="w-[6px]" /><Cross className="w-[6px]" /></div>
        <Grip className="mt-[3px] w-[15px] h-[3px]" />
        <Ico vb={16} className="mt-[7px] w-[15px] h-[14px]"><path d="M3 8V2h12v10H8M1 9h5v5H1z" strokeWidth="1.400" /></Ico>
      </div>
    </div>
  )
}

/* ---------- document area ---------- */

const RULER_H = [100, 0, 100, 200, 300, 400, 500, 600, 700, 800, 900, 1000, 1100, 1200, 1300, 1400, 1500, 1600, 1700, 1800, 1900, 2000, 2100]

function DocumentArea() {
  return (
    <div className="w-[1571px] shrink-0 flex flex-col bg-[#4b4b4b]">
      <div className="h-[36px] shrink-0 bg-[#424242] border-b border-[#393939]">
        <div className="w-[328px] h-full bg-[#535353] flex items-center pl-[49px] text-[13.500px] font-bold text-[#eee] leading-none whitespace-nowrap">
          <span className="w-[257px] tracking-[-0.1px]">led-1 @ 66,7% (Rectangle 1, RGB/8#) *</span>
          <svg viewBox="0 0 9 9" className="w-[9px] shrink-0" stroke="#aaa"><path d="M.5.5l8 8M8.500.5l-8 8" /></svg>
        </div>
      </div>
      <div className="h-[21px] w-[1551px] shrink-0 bg-[#484848] flex overflow-hidden relative text-[13.500px] leading-none text-[#989898]">
        <div className="w-[80px] shrink-0 bg-[repeating-linear-gradient(90deg,#6a6a6a_0_1px,transparent_1px_6.667px)] bg-[length:100%_3px] bg-no-repeat bg-bottom" />
        {RULER_H.map((n, i) => (
          <div key={i} className="w-[66.667px] shrink-0 border-l border-[#6c6c6c] pl-[1px] pt-[6px] bg-[repeating-linear-gradient(90deg,#6a6a6a_0_1px,transparent_1px_6.667px)] bg-[length:100%_3px] bg-no-repeat bg-bottom">
            <span className="tracking-[-0.1px]">{n}</span>
          </div>
        ))}
        <div className="absolute left-[108px] top-[1px] w-px h-[11px] bg-[#ddd]" />
      </div>
      <div className="flex h-[887px] shrink-0">
        <div className="w-[22px] shrink-0 bg-[#484848] overflow-hidden text-[13.500px] leading-none text-[#989898] bg-[repeating-linear-gradient(#6a6a6a_0_1px,transparent_1px_6.667px)] bg-[length:4px_100%] bg-[position:right_3px] bg-no-repeat flex flex-col">
          <div className="h-[616.300px] shrink-0" />
          {['800', '900', '1000', '1100', '1200'].map((n) => (
            <div key={n} className="h-[66.667px] shrink-0 border-t border-[#6c6c6c] pl-[2px] pt-[3px] flex flex-col">
              {n.split('').map((c, j) => <span key={j} className="h-[15px] shrink-0">{c}</span>)}
            </div>
          ))}
        </div>
        <div className="w-[1529px] relative bg-[#282828] shrink-0"><IllustratorWindow /></div>
      </div>
      <div className="h-[22px] bg-[#4b4b4b] flex text-[#ddd] text-[12px] leading-none shrink-0 border-b border-[#3b3b3b]">
        <div className="w-[61px] pl-[8px] pb-[3px] bg-[#444] flex items-center text-[12.500px]">66,67%</div>
        <div className="w-[229px] bg-[#535353] flex items-center pl-[38px] pr-[6px] justify-between text-[11.500px] text-[#ccc]"><span className="tracking-[-0.2px]">1920 px x 1080 px (72 ppi)</span><Chev className="w-[9px] -rotate-90" /></div>
      </div>
    </div>
  )
}

/* ---------- right side ---------- */

const BulletBox = <path d="M1 2h3v3H1zM1 7h3v3H1zM1 12h3v3H1zM6 3h5v1.500H6zM6 8h4v1.500H6zM6 13h3v1.500H6z" fill="currentColor" stroke="none" />

const DOCK = [
  ['h-[86px]', [
    <div className="flex items-start pb-[3px]"><Ico className="w-[11px] h-[15px] mt-[-3px]" vb={16}>{BulletBox}</Ico><FaPaintBrush size={18} className="mt-[3px]" /></div>,
    <Ico className="w-[26px] h-[24px] mb-[3px]"><path d="M0 6q3-5 8-3l2 3-2 3q-5 2-8-3zM10 5h13v3H10zM3 16h12v3H3zM14 17q4-6 8-5v11q-4 0-8-6z" fill="currentColor" stroke="none" /></Ico>,
  ]],
  ['h-[51px]', [<div className="flex items-start pb-[2px]"><Ico className="w-[11px] h-[15px] mt-[-3px]" vb={16}>{BulletBox}</Ico><FaStamp size={18} /></div>]],
  ['h-[87px]', [
    <span className="text-[21px] leading-none flex items-center">A<i className="w-[1.500px] h-[20px] bg-[#ddd]" /></span>,
    <span className="text-[24px] leading-none font-['Liberation_Sans']">¶</span>,
  ]],
  ['h-[51px]', [<Ico className="w-[24px] h-[24px] mb-[2px]"><path d="M3 3l8 8M14 14l4 3" strokeWidth="2.500" /><path d="M21 1L11 13" strokeWidth="2" /><path d="M9 12l4 4-7 7q-3 1-4-2z" fill="currentColor" /><circle cx="4" cy="4" r="2.500" strokeWidth="2.400" /><circle cx="20" cy="18" r="2.600" /><circle cx="16" cy="21" r="2" /></Ico>]],
  ['h-[51px]', [<BookIcon className="w-[21px] h-[21px] text-[#bbb] mb-[2px]" />]],
  ['h-[51px]', [<span className="text-[25px] leading-none italic font-['Liberation_Serif'] font-bold pb-[2px]">A</span>]],
]

function IconDock() {
  return (
    <div className="w-[53px] shrink-0 bg-[#535353] border-x-[3px] border-[#3f3f3f] text-[#ddd] flex flex-col">
      <div className="h-[15px] bg-[#424242] border-b border-[#3b3b3b] flex items-center justify-end pr-[7px] shrink-0"><Dbl left className="w-[8px]" /></div>
      {DOCK.map(([h, icons], i) => (
        <div key={i} className={`${h} shrink-0 border-b-2 border-[#3f3f3f] flex flex-col items-center pt-[4px]`}>
          <Grip />
          <div className="mt-[2px] flex flex-col items-center">{icons.map((ic, j) => <div key={j} className="h-[36px] flex items-center">{ic}</div>)}</div>
        </div>
      ))}
    </div>
  )
}

const Corner = ({ rot = '' }) => <Ico vb={20} className={`w-[19px] h-[19px] text-[#ddd] ${rot}`}><path d="M1.500 18.500V8Q1.500 1.500 8 1.500h10.500v17z" strokeWidth="1.600" /></Ico>

function PropertiesPanel() {
  return (
    <div className="h-[473px] shrink-0 flex flex-col">
      <div className="h-[36px] bg-[#424242] flex items-center justify-between shrink-0 pr-[7px] border-b border-[#3f3f3f]">
        <div className="w-[83px] h-[36px] bg-[#535353] flex items-center pl-[12px] pb-[5px] text-[12px] tracking-[-0.2px] font-bold text-[#eee] leading-none">Properties</div>
        <Burger className="w-[10px] text-[#bbb]" />
      </div>
      <div className="h-[41px] pt-[2px] flex items-center border-b border-[#414141] pl-[14px] text-[12px] text-[#ccc] leading-none shrink-0">
        <div className="w-[27px] h-[27px] bg-[#383838] flex items-center justify-center text-[#ddd] rounded-[2px]"><Nodes className="w-[16px] h-[16px]" /></div>
        <div className="ml-[6px] w-[21px] h-[16px] bg-[#ddd] flex items-center justify-center"><div className="w-[11px] h-[11px] rounded-full bg-[#535353]" /></div>
        <span className="ml-[11px]">Live Shape Properties</span>
      </div>
      <div className="flex flex-1">
        <div className="flex-1 pl-[9px] pt-[16px] text-[12px] leading-none text-[#ccc] flex flex-col">
          <div className="flex items-center h-[22px]">
            <Lbl className="ml-[3px] w-[23px]">W:</Lbl><Field className="w-[70px] h-[21px]">284 px</Field><LinkIcon className="ml-[13px]" />
            <Lbl className="ml-[17px] w-[20px]">H:</Lbl><Field className="w-[70px] h-[21px]">252 px</Field>
          </div>
          <div className="flex items-center h-[22px] mt-[11px]">
            <Lbl className="ml-[8px] w-[18px]">X:</Lbl><Field className="w-[71px] h-[21px]">824 px</Field>
            <Lbl className="ml-[49px] w-[18px]">Y:</Lbl><Field className="w-[71px] h-[21px]">457 px</Field>
          </div>
          <div className="flex items-center h-[23px] mt-[14px]">
            <div className="w-[36px] h-[24px] border border-[#707070] p-px"><NoneBox className="w-full h-full" /></div>
            <div className="ml-[6px] w-[36px] h-[24px] border border-[#707070] p-px bg-[#f00]"><StrokeRed className="w-full h-full" /></div>
            <Split className="ml-[8px] w-[78px] h-[21px]">5 px</Split>
            <Drop className="ml-[8px] w-[62px] h-[23px] pl-[4px]"><div className="w-[39px] h-[2px] bg-white" /></Drop>
          </div>
          <div className="flex items-center h-[21px] mt-[7px]">
            <Drop className="w-[78px] h-[21px] pl-[9px]"><Ico vb={16} className="w-[16px] h-[16px]"><path d="M2 2h12v12H2z" stroke="#000" fill="#ddd" strokeWidth="1.500" /><path d="M6 6h4v4H6z" fill="#535353" stroke="#222" strokeWidth="1" /><path d="M0 0h4v4H0zM12 0h4v4h-4zM0 12h4v4H0zM12 12h4v4h-4z" fill="#000" stroke="none" /></Ico></Drop>
            <Drop className="ml-[7px] w-[80px] h-[21px] pl-[11px]"><Ico vb={14} className="w-[14px] h-[14px]"><path d="M4 0h8v5H7v4h5v5H4z" fill="#ddd" stroke="none" /><path d="M0 5h4v4H0zM4 6.500h7" fill="#000" stroke="#000" strokeWidth="1" /></Ico></Drop>
            <Drop className="ml-[8px] w-[61px] h-[21px] pl-[10px]"><Ico vb={16} className="w-[16px] h-[15px]"><path d="M0 0h15v10h-5v6H0z" fill="#ddd" stroke="none" /><path d="M5 5h5v5H5zM7.500 8v8M8 7.500h8" fill="#000" stroke="#000" strokeWidth="1.300" /></Ico></Drop>
          </div>
          <Field className="ml-[22px] mt-[13px] w-[212px] h-[21px]">0px0px0px0px</Field>
          <div className="flex items-center h-[21px] mt-[8px] pl-[3px]">
            <Corner /><Field className="ml-[8px] w-[84px] h-[21px]">0 px</Field><Field className="ml-[6px] w-[84px] h-[21px]">0 px</Field><div className="ml-[10px]"><Corner rot="rotate-90" /></div>
          </div>
          <div className="ml-[103px] mt-[9px] w-[30px] h-[31px] bg-[#383838] flex items-center justify-center text-[#ddd] rounded-[2px]"><LinkIcon /></div>
          <div className="flex items-center h-[21px] mt-[8px] pl-[3px]">
            <Corner rot="-rotate-90" /><Field className="ml-[8px] w-[84px] h-[21px]">0 px</Field><Field className="ml-[6px] w-[84px] h-[21px]">0 px</Field><div className="ml-[10px]"><Corner rot="rotate-180" /></div>
          </div>
          <div className="flex mt-[15px] w-[166px] h-[30px] border border-[#666] rounded-[2px] text-[#ddd]">
            <div className="flex-1 bg-[#383838] flex items-center justify-center"><Ico vb={18} className="w-[18px] h-[18px]"><path d="M0 0h12v5h6v13H5v-5H0z" fill="currentColor" stroke="none" /></Ico></div>
            <div className="flex-1 border-l border-[#666] flex items-center justify-center"><Ico vb={18} className="w-[18px] h-[18px]"><path d="M1 1h11v4H5v8H1z" fill="currentColor" stroke="none" /><path d="M6.500 6.500h10v10h-10z" strokeWidth="1.200" /></Ico></div>
            <div className="flex-1 border-l border-[#666] flex items-center justify-center"><Ico vb={18} className="w-[18px] h-[18px]"><path d="M1.500 1.500h10v10h-10zM6.500 6.500h10v10h-10z" strokeWidth="1.200" /><path d="M6 6h6v6H6z" fill="currentColor" /></Ico></div>
            <div className="flex-1 border-l border-[#666] flex items-center justify-center"><Ico vb={18} className="w-[18px] h-[18px]"><path fillRule="evenodd" d="M1 1h12v4h4v12H5v-4H1zM6 6v6h6V6z" fill="currentColor" stroke="none" /></Ico></div>
          </div>
        </div>
        <div className="w-[20px] h-[363px] bg-[#4c4c4c]" />
      </div>
    </div>
  )
}

const LAYERS = [
  { name: 'Rectangle 1', sel: true },
  { name: 'Layer 3', art: <><path d="M10 8h15v10H10z" fill="#fff" /><path d="M18 9h6v5h-6z" fill="#555" stroke="#222" strokeWidth=".6" /><path d="M27 8h4v9h-4" stroke="#444" strokeDasharray="1 1" /></> },
  { name: 'Layer 2', art: <><path d="M12 8h13v10H12z" fill="#fff" /><path d="M18 10h5v6h-5z" fill="#888" stroke="#222" strokeWidth="1" /><path d="M25 13h2" stroke="#fff" /><path d="M28 8h3v9h-3" stroke="#444" strokeDasharray="1 1" /></> },
  { name: 'Layer 1', art: <><path d="M10 8h15v10H10z" fill="#fff" /><path d="M14 10h4v6h-4z" fill="#333" /><path d="M25 12h5" stroke="#fff" /></> },
  { name: 'Background', lock: true, art: <path d="M9 6h23v13H9z" fill="#fff" /> },
]

function LayersPanel() {
  return (
    <div className="flex-1 flex flex-col border-t-[3px] border-[#404040] text-[12px] leading-none text-[#ccc]">
      <div className="h-[34px] bg-[#424242] flex items-center shrink-0 font-bold text-[#999] text-[12.500px] tracking-[-0.2px] border-b border-[#3c3c3c]">
        <div className="w-[41px] h-full flex items-center pb-[2px] pl-[11px]">3D</div>
        <div className="w-[59px] h-[34px] bg-[#535353] text-[#eee] flex items-center pb-[2px] justify-center">Layers</div>
        <div className="w-[75px] h-full border-r border-[#3a3a3a] flex items-center pb-[2px] justify-center">Channels</div>
        <Burger className="ml-auto mr-[7px] w-[10px] text-[#bbb]" />
      </div>
      <div className="h-[39px] flex items-center pl-[4px] border-b border-[#454545] shrink-0 pt-[8px] text-[#ddd]">
        <Drop className="w-[109px] h-[24px] pl-[10px]"><Magnifier className="w-[13px] h-[13px]" /><span className="flex-1 pl-[4px]">Kind</span></Drop>
        <Ico className="ml-[15px] w-[16px] h-[15px]"><path d="M1 2h22v20H1z" strokeWidth="2" /><path d="M4 18l5-8 4 5 3-4 4 7z" fill="currentColor" stroke="none" /></Ico>
        <Ico className="ml-[15px] w-[14px] h-[14px]"><circle cx="12" cy="12" r="10.500" strokeWidth="2" /><path d="M20 4A11 11 0 0 1 4 20z" fill="currentColor" transform="rotate(180 12 12)" /></Ico>
        <TypeT className="ml-[16px] text-[18px] w-[13px]" />
        <Nodes className="ml-[16px] w-[15px] h-[15px]" />
        <Ico className="ml-[16px] w-[15px] h-[15px]"><path d="M8 12V1h9l5 5v14h-8M16 1v6h6" strokeWidth="2" /><path d="M1 11h12v12H1z" fill="currentColor" stroke="none" /></Ico>
        <div className="ml-auto mr-[6px] w-[10px] h-[23px] rounded-full bg-[#3f3f3f]"><div className="w-[10px] h-[10px] rounded-full bg-[#eee]" /></div>
      </div>
      <div className="h-[35px] flex items-center pl-[4px] border-b border-[#454545] shrink-0 pt-[4px]">
        <Drop className="w-[161px] h-[24px] pl-[10px]">Normal</Drop>
        <Lbl className="ml-[9px] w-[51px]">Opacity:</Lbl><Split className="w-[62px] h-[21px] mt-[-3px]" pl="pl-[4px]">100%</Split>
      </div>
      <div className="h-[38px] flex items-center pl-[8px] shrink-0 text-[#ddd]">
        <Lbl className="w-[41px] text-[#ccc]">Lock:</Lbl>
        <div className="w-[14px] h-[14px] border border-[#999] bg-[conic-gradient(#999_25%,#444_0_50%,#999_0_75%,#444_0)] bg-[length:8px_8px] shrink-0" />
        <FaPaintBrush size={15} className="ml-[13px] text-[#999] shrink-0" />
        <MoveIcon className="ml-[12px] w-[15px] h-[15px]" />
        <Ico className="ml-[11px] w-[17px] h-[16px]"><path d="M5 1v22M19 4v19M0 4h14l5 5M1 19h23M21 4h3" strokeWidth="1.800" /><path d="M13 3l7 7h-7z" fill="currentColor" stroke="none" /></Ico>
        <Ico className="ml-[13px] w-[14px] h-[16px]"><path d="M2 10h20v14H2z" fill="currentColor" stroke="none" /><path d="M7 10V5q0-4 5-4t5 4v5" strokeWidth="2.600" /><circle cx="12" cy="16" r="2" fill="#444" stroke="none" /></Ico>
        <Lbl className="ml-[27px] w-[25px] text-[#ccc]">Fill:</Lbl><Split className="w-[62px] h-[21px]" pl="pl-[4px]">100%</Split>
      </div>
      <div className="flex flex-1">
        <div className="w-[274px] flex flex-col bg-[#4c4c4c]">
          {LAYERS.map((l) => (
            <div key={l.name} className="h-[35px] flex shrink-0 border-b border-[#454545] bg-[#535353]">
              <div className="w-[38px] border-r border-[#454545] flex items-center justify-center"><Eye /></div>
              <div className={`flex-1 flex items-center pl-[2px] text-[#ddd] ${l.sel ? 'bg-[#6a6a6a]' : ''}`}>
                {l.sel ? (
                  <svg viewBox="0 0 45 29" className="w-[45px] h-[29px]" fill="none">
                    <path d="M1 9V1h14M30 1h14v8M44 20v8H30M15 28H1v-8" stroke="#fff" strokeWidth="1.400" />
                    <path d="M3 26V3h39v6" stroke="#333" /><rect x="11" y="8" width="13" height="13" fill="#f2f2f2" /><path d="M3 26h39" stroke="#333" />
                    <rect x="25" y="9" width="17" height="17" fill="#555" stroke="#333" /><path d="M28.500 13h10v10h-10z" stroke="#ccc" />
                    <path d="M27 11h3v3h-3zM37 11h3v3h-3zM27 22h3v3h-3zM37 22h3v3h-3z" fill="#ccc" />
                  </svg>
                ) : (
                  <svg viewBox="0 0 40 24" className="ml-[2px] mr-[3px] w-[40px] h-[24px]" fill="none"><rect x=".5" y=".5" width="39" height="23" stroke="#2c2c2c" />{l.art}</svg>
                )}
                <span className={`ml-[10px] ${l.lock ? 'italic' : ''}`}>{l.name}</span>
                {l.lock && <Ico className="ml-auto mr-[20px] w-[13px] h-[16px]"><path d="M2 10h20v13H2z" strokeWidth="2" /><path d="M7 10V5q0-4 5-4t5 4v5" strokeWidth="2" /><circle cx="12" cy="16" r="1.500" fill="currentColor" /></Ico>}
              </div>
            </div>
          ))}
        </div>
        <div className="flex-1 bg-[#4c4c4c]" />
      </div>
      <div className="h-[32px] border-t border-[#3f3f3f] border-b flex items-center shrink-0 text-[#ddd] pl-[40px]">
        <LinkIcon className="text-[#888]" />
        <span className="ml-[18px] w-[24px] italic text-[15px]">fx<span className="text-[6px]">▾</span></span>
        <div className="ml-[9px] w-[16px] h-[12px] bg-[#ddd] flex items-center justify-center"><div className="w-[8px] h-[8px] rounded-full bg-[#444]" /></div>
        <Ico className="ml-[19px] w-[15px] h-[15px]"><circle cx="12" cy="12" r="10" strokeWidth="2" /><path d="M20 4A11 11 0 0 1 4 20z" fill="currentColor" transform="rotate(180 12 12)" /></Ico>
        <Ico vb={16} className="ml-[18px] w-[16px] h-[14px]"><path d="M0 2h6l1 2h9v11H0z" fill="currentColor" stroke="none" /></Ico>
        <Ico className="ml-[18px] w-[15px] h-[15px]"><path d="M1.500 1.500h21v21h-21zM12 6.500v11M6.500 12h11" strokeWidth="2" /></Ico>
        <Ico className="ml-[18px] w-[15px] h-[16px]"><path d="M4 6h16v17H4zM0 5h24M8 2h8M9 9v11M12 9v11M15 9v11" strokeWidth="1.800" /></Ico>
      </div>
    </div>
  )
}

function HistoryFloat() {
  return (
    <div className="absolute left-[1498px] top-[625px] w-[49px] h-[69px] bg-[#535353] border border-[#3a3a3a] rounded-t-[4px] shadow-[1px_1px_4px_rgba(0,0,0,0.5)] flex flex-col items-center text-[#ddd]">
      <div className="h-[17px] w-full bg-[#424242] border-b border-[#383838] flex items-center rounded-t-[4px]"><Dbl className="ml-[10px] w-[8px]" /><Cross className="ml-[14px] w-[8px] text-[#bbb]" /></div>
      <Grip className="mt-[4px] w-[24px] h-[5px]" />
      <Ico className="mt-[6px] w-[22px] h-[24px]"><path d="M3 2h5v5H3zM3 9.500h5v5H3z" strokeWidth="1.600" /><path d="M2 17h7v6H2zM13 2l9 1-5 3q9 9-1 17 5-8 0-14l-2 3z" fill="currentColor" stroke="none" /></Ico>
    </div>
  )
}

/* ---------- taskbar ---------- */

const TILES = {
  Id: 'bg-[#49021f] text-[#ff3366]', Ai: 'bg-[#330000] text-[#ff9a00]', Ps: 'bg-[#001e36] text-[#31a8ff]', Ae: 'bg-[#00005b] text-[#9999ff]',
  Pr: 'bg-[#00005b] text-[#9999ff]', Me: 'bg-[#00005b] text-[#9999ff]', Br: 'bg-[#000b1d] text-white',
}

const Tile = ({ id }) => <div className={`w-[18px] h-[18px] rounded-[3px] flex items-center justify-center text-[10.500px] font-bold leading-none tracking-[-0.3px] ${TILES[id]}`}>{id}</div>

const Explorer = () => (
  <svg viewBox="0 0 20 18" className="w-[18px] h-[17px]"><path d="M0 1h7l2 2h10v14H0z" fill="#f8c644" /><path d="M0 5h20v12H0z" fill="#ffdc77" /><path d="M4 17v-6q0-1 1-1h10q1 0 1 1v6h-3v-4H7v4z" fill="#3a8fd6" /></svg>
)
const Mail = () => (
  <svg viewBox="0 0 20 18" className="w-[20px] h-[19px]"><path d="M10 0l10 6v12H0V6z" fill="#0f4f9a" /><path d="M0 6h20v12H0z" fill="#dff3fd" /><path d="M0 6l12 12H0z" fill="#28a8ea" /><path d="M20 6L8 18h12z" fill="#50c0f5" /><path d="M0 6h20l-10 7z" fill="#e9f7ff" /></svg>
)
const Chrome = () => (
  <svg viewBox="0 0 20 20" className="w-[19px] h-[19px]"><circle cx="10" cy="10" r="10" fill="#fbc116" /><path d="M10 10L1.300 5A10 10 0 0 0 10 20l5-8z" fill="#2aa147" /><path d="M1.300 5A10 10 0 0 1 18.700 5.500H10z" fill="#e33b2e" /><path d="M1.300 5L10 10V5z" fill="#e33b2e" /><circle cx="10" cy="10" r="4.700" fill="#fff" /><circle cx="10" cy="10" r="3.700" fill="#4285f4" /></svg>
)
const Cinema = () => (
  <svg viewBox="0 0 20 20" className="w-[19px] h-[19px]"><circle cx="10" cy="10" r="9.500" fill="#d4d8e0" /><circle cx="11" cy="9" r="7.500" fill="#101a50" /><circle cx="11" cy="10" r="4.500" fill="#4a68c8" /><path d="M10 8q5-5 7-3 0 6-5 8z" fill="#1a2665" /></svg>
)
const Teams = () => (
  <svg viewBox="0 0 22 22" className="w-[20px] h-[20px]"><circle cx="12" cy="4" r="3.500" fill="#7b83eb" /><circle cx="18.500" cy="5" r="2.500" fill="#5059c9" /><path d="M15 8h7v8q-1 3-5 3z" fill="#5059c9" /><path d="M8 8h9v9q-1 5-6 5l-3-3z" fill="#7b83eb" /><rect y="5" width="12" height="13" rx="1" fill="#4b53bc" /><path d="M3 8.500h6.500M6.200 8.500V15" stroke="#fff" strokeWidth="1.700" /></svg>
)

const APPS = [
  ['win', <svg viewBox="0 0 20 20" className="w-[20px] h-[20px]" fill="#fff"><path d="M0 3l8.500-1.300v8H0zM9.500 1.500L20 0v9.700H9.500zM0 10.500h8.500v8L0 17.200zM9.500 10.500H20V20L9.500 18.600z" /></svg>],
  ['search', <Ico className="w-[21px] h-[21px] text-white"><circle cx="14" cy="9" r="7.500" strokeWidth="1.500" /><path d="M9 14.500L2 22.500" strokeWidth="1.700" /></Ico>],
  ['task', <Ico className="w-[21px] h-[21px] text-white"><path d="M2 1v5h14V1M2 23v-5h14v5M2 8.500h14v7H2zM21 1v5M21 11v12" strokeWidth="1.400" /><path d="M20 7h2.500v3H20z" fill="currentColor" stroke="none" /></Ico>],
  ['files', <Explorer />], ['mail', <Mail />], ['in', <FaLinkedin size={22} color="#0a7ec2" className="bg-white [clip-path:inset(1px_1px)]" />], ['tg', <FaTelegram size={18} color="#38a5db" className="bg-white rounded-full" />],
  ['opera', <svg viewBox="0 0 18 18" className="w-[19px] h-[19px]"><ellipse cx="9" cy="9" rx="6.500" ry="7.200" fill="none" stroke="#e8192c" strokeWidth="3.600" /></svg>],
  ['chrome', <Chrome />], ['Id'], ['Ai'], ['Ps'], ['Ae'], ['Pr'], ['Me'], ['Br'], ['c4d', <Cinema />], ['teams', <Teams />],
]

function Taskbar({ active, time }) {
  const running = ['chrome', 'Ai', 'Ps', 'teams']
  return (
    <div className="w-[1920px] h-[40px] bg-[#1c1c1c] flex shrink-0 text-white">
      {APPS.map(([id, icon], i) => (
        <div key={id} className={`h-[40px] shrink-0 flex flex-col items-center ${i < 3 ? 'w-[45px]' : 'w-[46px]'} ${i === 3 ? 'ml-[3px]' : ''} ${id === active ? 'bg-[#4a4a4a]' : ''}`}>
          <div className="flex-1 flex items-center pt-[1px]">{icon || <Tile id={id} />}</div>
          <div className={`h-[3px] ${id === active ? 'w-full' : 'w-[35px]'} ${running.includes(id) ? 'bg-[#76b0de]' : ''}`} />
        </div>
      ))}
      <div className="ml-auto flex items-center text-[14px] leading-none tracking-[-0.3px]">
        <div className="relative w-[27px] h-[27px] rounded-full border-[3px] border-white bg-[#0a92d4] flex items-center justify-center text-[19px] font-bold">?<div className="absolute right-[-4px] bottom-[-3px] w-[11px] h-[12px] rounded-full bg-[#0a92d4] text-[9px] flex items-center justify-center">i</div></div>
        <Chev className="ml-[13px] w-[17px] rotate-180" />
        <svg viewBox="0 0 20 14" className="ml-[12px] w-[20px] h-[14px]"><path d="M4 5Q6 0 11 1.500T17 6L5 12Q0 12 0 9t4-4z" fill="#bbb" /><path d="M2 13L12 5q3-1 4 1 4 0 4 4 0 3-4 3z" fill="#fff" /></svg>
        <FaDropbox size={18} className="ml-[10px]" />
        <svg viewBox="0 0 20 14" className="ml-[12px] w-[20px] h-[14px]" fill="none" stroke="#fff"><path d="M4 6.500V13h14V4H7M18 7h2v3h-2" strokeWidth="1.400" /><path d="M6.500 6.500h9v4.500h-9z" fill="#fff" /><path d="M1 1v4h4V1M3 5v5" strokeWidth="1.300" /></svg>
        <svg viewBox="0 0 20 16" className="ml-[10px] w-[20px] h-[16px]" fill="none" stroke="#fff"><path d="M1 5.500v5h3l4 4v-13l-4 4z" strokeWidth="1.200" /><path d="M11 6q1 2 0 4" /><path d="M13.500 3.500q3 4.500 0 9M16 1.500q5 6.500 0 13" stroke="#777" /></svg>
        <span className="ml-[14px] w-[46px]">ENG</span><span className="w-[45px]">{time}</span>
        <svg viewBox="0 0 22 20" className="ml-[10px] w-[22px] h-[21px]" fill="none" stroke="#fff" strokeWidth="1.300"><path d="M13 16H9l-3-1.500H1V1h19v9" /><path d="M19.500 11q2 8-6 7 6-2 6-7z" fill="#fff" /></svg>
        <div className="ml-[24px] mr-[5px] w-px h-[40px] bg-[#666]" />
      </div>
    </div>
  )
}

export default function App() {
  return (
    <div className="relative w-[1920px] h-[1080px] overflow-hidden flex flex-col bg-[#535353] font-['Open_Sans','Noto_Sans',sans-serif]">
      <MenuBar />
      <OptionsBar />
      <div className="flex h-[966px] shrink-0">
        <DocumentArea />
        <IconDock />
        <div className="w-[296px] shrink-0 flex flex-col border-r-2 border-[#404040] bg-[#535353]">
          <div className="h-[15px] bg-[#424242] border-b border-[#3b3b3b] flex items-center justify-end pr-[7px] text-[#ddd] shrink-0"><Dbl className="w-[8px]" /></div>
          <PropertiesPanel />
          <LayersPanel />
        </div>
      </div>
      <Taskbar active="Ps" time="14:22" />
      <ToolPalette />
      <HistoryFloat />
    </div>
  )
}
